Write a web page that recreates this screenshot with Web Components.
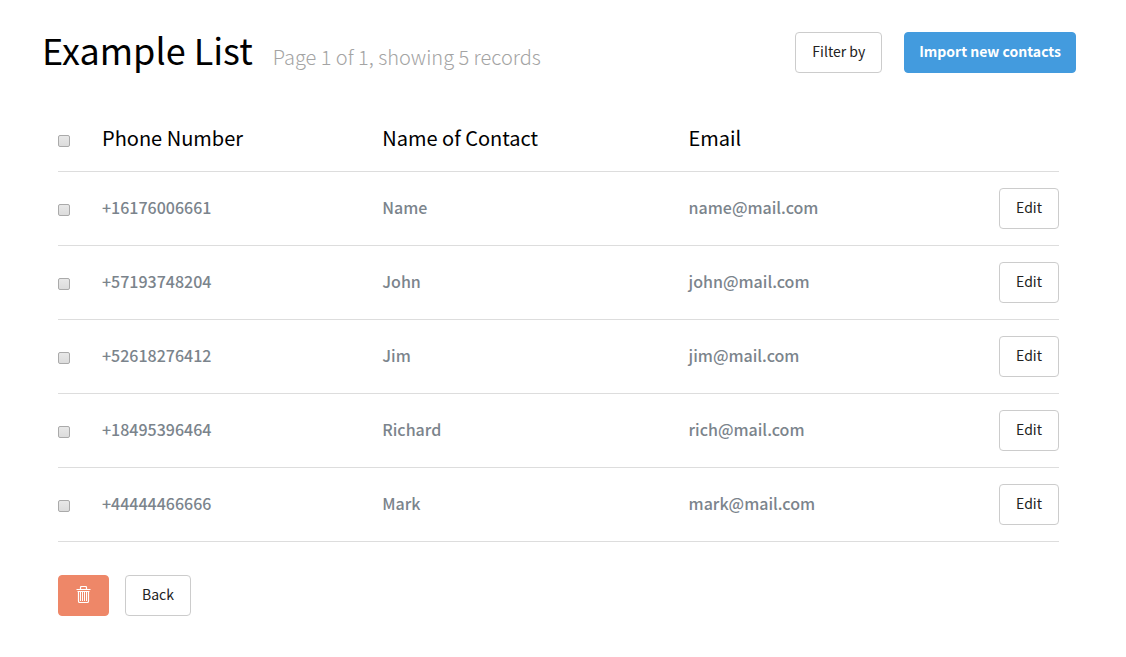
<!DOCTYPE html>
<html lang="en">
<head>
<meta charset="utf-8">
<meta name="viewport" content="width=device-width, initial-scale=1">
<title>Example List</title>
<style>
    body {
        margin: 0;
        background: #fff;
        color: #000;
        font-family: "Noto Sans CJK JP", "Noto Sans", sans-serif;
    }
</style>
</head>
<body>
    <list-page>
        <page-header slot="header" heading="Example List" summary="Page 1 of 1, showing 5 records">
            <app-button>Filter by</app-button>
            <app-button variant="primary">Import new contacts</app-button>
        </page-header>
        <contact-table></contact-table>
        <app-button slot="actions" variant="danger" label="Delete selected"><trash-icon></trash-icon></app-button>
        <app-button slot="actions">Back</app-button>
    </list-page>

<script>
class AppButton extends HTMLElement {
    connectedCallback() {
        const label = this.getAttribute("label");
        const shadow = this.attachShadow({ mode: "open" });

        shadow.innerHTML = `
            <style>
                :host {
                    display: inline-block;
                }

                button {
                    display: block;
                    padding: 0 16px 2px;
                    border: 1px solid #ccc;
                    border-radius: 4px;
                    background: #fff;
                    color: #222;
                    font: 400 14px/37px "Noto Sans CJK JP", "Noto Sans", sans-serif;
                    white-space: nowrap;
                    cursor: pointer;
                }

                :host([variant="primary"]) button {
                    padding: 0 14px 2px;
                    border-color: #439bde;
                    background: #439bde;
                    color: #fff;
                    font-weight: 700;
                }

                :host([variant="danger"]) button {
                    border-color: #ee8768;
                    background: #ee8768;
                    color: #fff;
                }
            </style>
            <button type="button"${label ? ` aria-label="${label}"` : ""}><slot></slot></button>`;
    }
}

class TrashIcon extends HTMLElement {
    connectedCallback() {
        const shadow = this.attachShadow({ mode: "open" });

        shadow.innerHTML = `
            <style>
                :host {
                    display: flex;
                    align-items: center;
                    width: 17px;
                    height: 37px;
                }
            </style>
            <svg width="17" height="17" viewBox="0 0 17 17" fill="none" stroke="currentColor" aria-hidden="true">
                <path d="M1.500 3.500h14M5.500 3V1.500q0-1 1-1h4q1 0 1 1V3" stroke-width="1.200"/>
                <path d="M3.500 5v10q0 1.500 1 1.500h8q1 0 1-1.500V5M2.500 5.500h12" stroke-width="1.200"/>
                <path d="M5.500 6v9M7.500 6v9M9.500 6v9M11.500 6v9"/>
            </svg>`;
    }
}

class PageHeader extends HTMLElement {
    connectedCallback() {
        const shadow = this.attachShadow({ mode: "open" });

        shadow.innerHTML = `
            <style>
                :host {
                    display: flex;
                    justify-content: space-between;
                    align-items: flex-start;
                    gap: 24px;
                }

                .titles {
                    display: flex;
                    flex-wrap: wrap;
                    align-items: baseline;
                    column-gap: 20px;
                }

                h1, p {
                    margin: 0;
                    font-weight: 400;
                }

                h1 {
                    font-size: 36px;
                    line-height: 34px;
                }

                p {
                    color: #a4a4a4;
                    font-size: 20px;
                    font-weight: 300;
                    line-height: 20px;
                }

                .buttons {
                    display: flex;
                    gap: 22px;
                }
            </style>
            <div class="titles">
                <h1>${this.getAttribute("heading")}</h1>
                <p>${this.getAttribute("summary")}</p>
            </div>
            <div class="buttons"><slot></slot></div>`;
    }
}

class ContactTable extends HTMLElement {
    constructor() {
        super();

        this.contacts = [
            { phone: "+16176006661", name: "Name", email: "name@mail.com" },
            { phone: "+57193748204", name: "John", email: "john@mail.com" },
            { phone: "+52618276412", name: "Jim", email: "jim@mail.com" },
            { phone: "+18495396464", name: "Richard", email: "rich@mail.com" },
            { phone: "+44444466666", name: "Mark", email: "mark@mail.com" }
        ];

        this.shadow = this.attachShadow({ mode: "open" });
    }

    connectedCallback() {
        this.shadow.innerHTML = `
            <style>
                :host {
                    display: block;
                }

                table {
                    width: 100%;
                    border-spacing: 0;
                    table-layout: fixed;
                }

                .check { width: 44px; }
                .phone { width: 28%; }
                .name { width: 30.6%; }
                .edit { width: 80px; }

                th, td {
                    border-bottom: 1px solid #ddd;
                    text-align: left;
                    vertical-align: middle;
                }

                th {
                    padding: 16px 0 18px;
                    font-size: 20px;
                    font-weight: 400;
                    line-height: 30px;
                }

                td {
                    padding: 16px 0 20px;
                    color: #7b848c;
                    font-size: 16px;
                    font-weight: 500;
                    line-height: 24px;
                }

                td:last-child {
                    padding: 16px 0;
                    text-align: right;
                }

                app-button {
                    vertical-align: top;
                }

                input {
                    appearance: none;
                    display: block;
                    width: 12px;
                    height: 12px;
                    margin: 6px 0 0;
                    border: 1px solid #aaa;
                    border-radius: 2px;
                    background: linear-gradient(#e8e8e8, #dcdcdc);
                }

                input:checked {
                    background: #439bde;
                }
            </style>
            <table>
                <colgroup>
                    <col class="check"><col class="phone"><col class="name"><col><col class="edit">
                </colgroup>
                <thead>
                    <tr>
                        <th><input type="checkbox" id="all" aria-label="Select all contacts"></th>
                        <th scope="col">Phone Number</th>
                        <th scope="col">Name of Contact</th>
                        <th scope="col" colspan="2">Email</th>
                    </tr>
                </thead>
                <tbody>
                    ${this.contacts.map((contact) => `
                    <tr>
                        <td><input type="checkbox" aria-label="Select ${contact.name}"></td>
                        <td>${contact.phone}</td>
                        <td>${contact.name}</td>
                        <td>${contact.email}</td>
                        <td><app-button>Edit</app-button></td>
                    </tr>`).join("")}
                </tbody>
            </table>`;

        // the box in the heading ticks every row
        this.shadow.querySelector("#all").addEventListener("change", (event) => {
            this.shadow.querySelectorAll("td input").forEach((box) => {
                box.checked = event.target.checked;
            });
        });
    }
}

class ListPage extends HTMLElement {
    connectedCallback() {
        const shadow = this.attachShadow({ mode: "open" });

        shadow.innerHTML = `
            <style>
                :host {
                    display: block;
                    padding: 32px 50px 40px 42px;
                }

                main {
                    padding: 34px 17px 0 16px;
                }

                .actions {
                    display: flex;
                    gap: 16px;
                    margin-top: 33px;
                }
            </style>
            <slot name="header"></slot>
            <main>
                <slot></slot>
                <div class="actions"><slot name="actions"></slot></div>
            </main>`;
    }
}

window.customElements.define("app-button", AppButton);
window.customElements.define("trash-icon", TrashIcon);
window.customElements.define("page-header", PageHeader);
window.customElements.define("contact-table", ContactTable);
window.customElements.define("list-page", ListPage);
</script>
</body>
</html>
